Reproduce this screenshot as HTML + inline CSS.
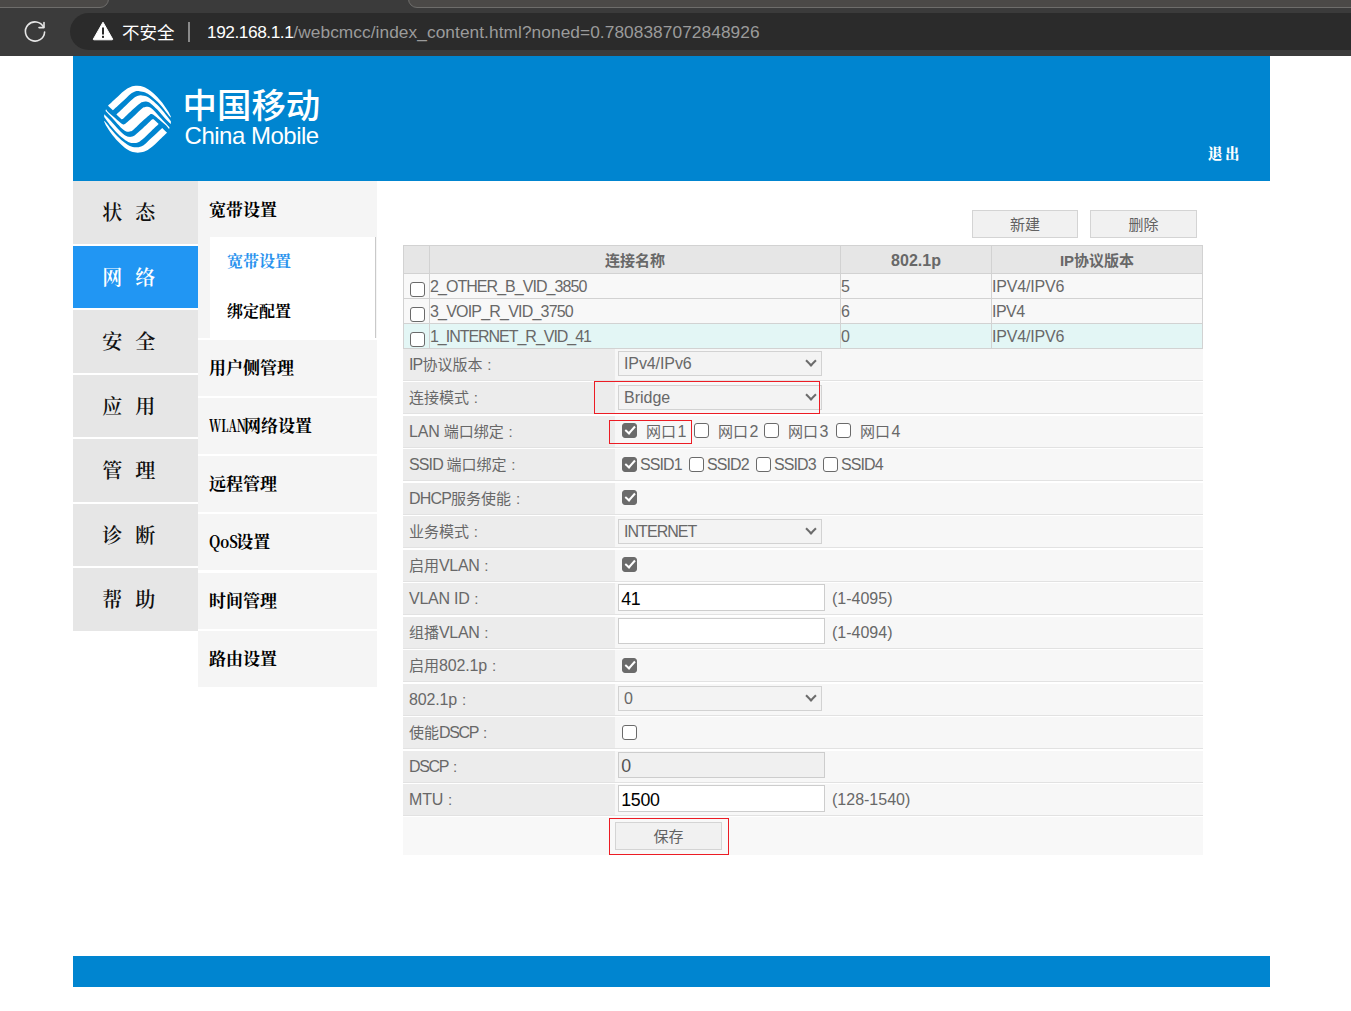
<!DOCTYPE html>
<html lang="zh-CN">
<head>
<meta charset="utf-8">
<title>China Mobile</title>
<style>
*{box-sizing:border-box;}
html,body{margin:0;padding:0;}
body{width:1351px;height:1011px;overflow:hidden;background:#fff;position:relative;
  font-family:"Liberation Sans","Noto Sans CJK SC",sans-serif;font-size:15px;color:#686868;}
.abs{position:absolute;}
/* ---------- browser chrome ---------- */
#chrome{left:0;top:0;width:1351px;height:56px;background:#3b3b3b;}
.tab{position:absolute;top:-10px;height:18px;background:#4b4947;border:1px solid #6e6d6b;border-radius:0 0 9px 9px;}
#pill{left:70px;top:13px;width:1400px;height:37px;background:#2b2b2b;border-radius:18.5px 0 0 18.5px;}
#url{left:207px;top:20px;font-size:17.3px;line-height:24px;color:#9b9b9b;white-space:nowrap;letter-spacing:-0.45px;}
#url b{font-weight:normal;color:#fff;}
#unsafe{left:122px;top:19px;font-size:17.5px;line-height:26px;color:#fff;white-space:nowrap;font-family:"Noto Sans CJK SC","Liberation Sans",sans-serif;}
#sep{left:188px;top:22px;width:1.5px;height:20px;background:#8a8a8a;}
/* ---------- header ---------- */
#hdr{left:73px;top:55.5px;width:1197px;height:125px;background:#0085d0;}
#cn{left:182.6px;top:79px;font-family:"Noto Sans CJK SC","Liberation Sans",sans-serif;font-weight:500;font-size:34.4px;line-height:48px;color:#fff;white-space:nowrap;letter-spacing:0px;}
#en{left:184.6px;top:121.3px;font-size:24px;line-height:30px;color:#fff;white-space:nowrap;letter-spacing:-0.5px;}
#logout{left:1208px;top:142.4px;font-family:"Noto Serif CJK SC","Liberation Serif",serif;font-weight:900;font-size:14.5px;letter-spacing:2.4px;line-height:22px;color:#fff;white-space:nowrap;}
/* ---------- nav ---------- */
.nav{position:absolute;left:73px;width:125px;height:62.5px;background:#e6e6e6;color:#111;
  font-family:"Noto Serif CJK SC","Liberation Serif",serif;font-weight:600;font-size:20px;line-height:62px;text-align:center;white-space:pre;word-spacing:8px;padding-right:13.6px;}
.nav.on{background:#2196f3;color:#fff;}
.sub{position:absolute;left:198px;width:179px;height:56px;background:#f5f5f5;color:#000;
  font-family:"Noto Serif CJK SC","Liberation Serif",serif;font-weight:700;font-size:17px;line-height:54px;padding-left:11px;white-space:nowrap;}
#subbox{left:210px;top:237px;width:166px;height:100.5px;background:#fff;border-right:1.5px solid #c9c9c9;}
.sub2{position:absolute;left:227px;font-family:"Noto Serif CJK SC","Liberation Serif",serif;font-weight:700;font-size:16px;line-height:24px;color:#000;white-space:nowrap;}

/* ---------- main ---------- */
.btn{background:#f1f1f1;border:1px solid #d4d4d4;color:#626262;font-size:15px;line-height:25px;text-align:center;font-family:"Noto Sans CJK SC","Liberation Sans",sans-serif;}
.tbl{border-top:1px solid #d2d2d2;border-left:1px solid #d2d2d2;z-index:2;}
.tr{position:absolute;left:0;width:799px;background:#f8f8f8;}
.tr.th{background:#e6e6e6;font-weight:700;text-align:center;}
.tr.th .c{line-height:29px;letter-spacing:0;font-size:15px;}
.tr.hl{background:#e3f6f5;}
.c{position:absolute;top:0;height:100%;border-right:1px solid #d2d2d2;border-bottom:1px solid #d2d2d2;line-height:25.4px;white-space:nowrap;padding-left:0;font-size:16px;overflow:hidden;}
.c0{left:0;width:26px;}
.c1{left:26px;width:411px;}
.c2{left:437px;width:151px;}
.c3{left:588px;width:211px;}
.cb{position:absolute;display:block;width:15px;height:15px;border:1.5px solid #6a6a6a;border-radius:3px;background:#fff;}
.c0 .cb{left:6px;top:7.5px;}
.cb.on{background:#6b6b6b;border-color:#6b6b6b;}
.cb.on:after{content:"";position:absolute;left:3.7px;top:0.4px;width:4.4px;height:8.4px;border:solid #fff;border-width:0 2.3px 2.3px 0;transform:rotate(42deg);}
.row{position:absolute;left:403px;width:800px;height:32px;background:#f7f7f7;border-bottom:1px solid #e2e2e2;}
.lb{position:absolute;left:0;top:0;width:212px;height:31px;background:#ececec;padding-left:6px;line-height:31px;white-space:nowrap;font-size:15px;}
.t{position:absolute;top:0;line-height:31px;white-space:nowrap;font-size:15px;}
.t.ss{letter-spacing:-0.9px;font-size:16px;}
.l{font-size:16px;}
.k{font-style:normal;margin-left:4.8px;}
.sel{position:absolute;left:215px;top:3.2px;width:204px;height:25.2px;background:#f3f3f3;border:1px solid #d2d2d2;line-height:24.6px;padding-left:5px;font-size:16px;white-space:nowrap;}
.sel:after{content:"";position:absolute;right:6.3px;top:5.3px;width:6px;height:6px;border:solid #6b6b6b;border-width:0 2px 2px 0;transform:rotate(45deg);}
.inp{position:absolute;left:215px;top:1.2px;width:207px;height:26.4px;background:#fff;border:1px solid #cdcdcd;line-height:24px;padding-top:1.6px;overflow:hidden;padding-left:2.2px;font-size:17.8px;letter-spacing:-0.25px;color:#000;white-space:nowrap;font-family:"Liberation Sans",sans-serif;}
.inp.dis{background:#f0f0f0;color:#545454;}
.red{border:1px solid #ec1c24;}
.hw{display:inline-block;vertical-align:top;white-space:nowrap;}
.hw span{display:inline-block;transform-origin:0 50%;}
/* ---------- footer ---------- */
#ftr{left:73px;top:956px;width:1197px;height:31px;background:#0085d0;}
</style>
</head>
<body>
<!-- browser chrome -->
<div id="chrome" class="abs">
  <div class="tab" style="left:-12px;width:121px;"></div>
  <div class="tab" style="left:408px;width:1000px;"></div>
  <div id="pill" class="abs"></div>
  <svg class="abs" style="left:22px;top:19px" width="26" height="26" viewBox="0 0 26 26" fill="none" stroke="#e6e6e6" stroke-width="1.6" stroke-linecap="round" stroke-linejoin="round">
    <path d="M21.6 8.2 A9.6 9.6 0 1 0 22.6 13"/>
    <path d="M22 3.6 V8.6 H17"/>
  </svg>
  <svg class="abs" style="left:92px;top:21px" width="22" height="20" viewBox="0 0 22 20">
    <path d="M11 1.2 L20.6 18 Q21 18.8 20 18.8 H2 Q1 18.8 1.4 18 Z" fill="#fff" stroke="#fff" stroke-width="1" stroke-linejoin="round"/>
    <rect x="10" y="6.5" width="2" height="7" fill="#2b2b2b"/>
    <rect x="10" y="14.8" width="2" height="2.1" fill="#2b2b2b"/>
  </svg>
  <div id="unsafe" class="abs">不安全</div>
  <div id="sep" class="abs"></div>
  <div id="url" class="abs"><b>192.168.1.1</b><span style="letter-spacing:0.07px">/webcmcc/index_content.html?noned=0.7808387072848926</span></div>
</div>

<!-- header -->
<div id="hdr" class="abs"></div>
<svg id="logo" class="abs" style="left:95px;top:76px" width="90" height="86" viewBox="0 0 1058 1011" fill="#fff">
  <g id="lgA">
  <path d="M153 349 C168 334 215 291 246 262 C277 233 311 197 340 175 C368 153 392 138 418 128 C444 118 471 115 497 115 C523 115 549 118 575 128 C601 138 627 155 654 175 C680 195 706 220 732 248 C758 276 789 314 811 343 C832 371 849 398 863 421 C877 444 887 469 892 479 L892 489 C887 484 877 474 863 458 C849 441 832 416 811 390 C789 364 758 327 732 301 C706 275 677 251 654 233 C630 215 613 203 591 194 C569 184 543 180 523 178 C503 176 488 177 470 183 C453 189 440 195 418 212 C396 229 364 263 340 285 C316 307 297 324 275 344 C253 364 221 394 210 404 Z"/>
  <path d="M251 452 C267 437 315 392 347 361 C379 330 419 290 444 269 C469 248 479 242 497 235 C514 228 532 227 549 228 C566 228 584 231 601 238 C619 245 632 253 654 269 C675 286 706 311 732 337 C758 363 789 400 811 426 C832 452 849 477 863 494 C877 512 887 527 892 533 L892 565 C878 551 837 512 811 484 C784 455 758 422 732 395 C706 368 675 337 654 322 C632 306 617 303 601 301 C586 298 572 303 560 306 C547 309 547 307 528 322 C509 336 476 366 444 395 C413 424 360 476 340 495 C320 514 331 504 326 506 C321 508 314 507 311 507 Z"/>
  </g>
  <path d="M129 391 C135 398 145 414 163 433 C182 451 218 480 242 501 C266 522 294 547 310 558 C326 569 332 570 341 569 C350 568 349 566 366 552 C383 538 414 512 444 484 C475 456 525 404 549 384 C573 364 577 367 591 364 C605 360 618 358 633 364 C648 369 659 376 680 395 C701 414 732 451 758 479 C784 506 817 541 837 562 C856 583 869 597 876 604 L871 625 C865 618 855 602 837 583 C818 565 782 536 758 515 C734 494 706 469 690 458 C674 447 668 446 659 447 C650 448 651 450 634 464 C617 478 586 504 556 532 C525 560 475 612 451 632 C427 652 423 649 409 652 C395 656 382 658 367 652 C352 647 341 640 320 621 C299 602 268 565 242 537 C216 510 183 475 163 454 C144 433 131 419 124 412 Z"/>
  <use href="#lgA" transform="rotate(180 500 508)"/>
</svg>
<div id="cn" class="abs">中国移动</div>
<div id="en" class="abs">China Mobile</div>
<div id="logout" class="abs">退出</div>

<!-- left nav -->
<div class="nav" style="top:181px">状 态</div>
<div class="nav on" style="top:245.5px">网 络</div>
<div class="nav" style="top:310px">安 全</div>
<div class="nav" style="top:374.5px">应 用</div>
<div class="nav" style="top:439px">管 理</div>
<div class="nav" style="top:503.5px">诊 断</div>
<div class="nav" style="top:568px">帮 助</div>

<!-- sub nav -->
<div class="sub" style="top:181px;height:157px;line-height:56px;">宽带设置</div>
<div id="subbox" class="abs"></div>
<div class="sub2" style="top:249px;color:#2b93ee;">宽带设置</div>
<div class="sub2" style="top:299px;">绑定配置</div>
<div class="sub" style="top:339.5px">用户侧管理</div>
<div class="sub" style="top:398px"><span class="hw" style="width:35px"><span style="transform:scaleX(0.66)">WLAN</span></span>网络设置</div>
<div class="sub" style="top:456.2px">远程管理</div>
<div class="sub" style="top:514.4px"><span class="hw" style="width:27.3px"><span style="transform:scaleX(0.85)">QoS</span></span>设置</div>
<div class="sub" style="top:572.6px">时间管理</div>
<div class="sub" style="top:630.8px">路由设置</div>

<!-- MAIN -->
<div id="main">
<div class="btn abs" style="left:972px;top:210px;width:106px;height:28px;">新建</div>
<div class="btn abs" style="left:1090px;top:210px;width:107px;height:28px;">删除</div>

<div class="abs tbl" style="left:403px;top:244.5px;width:800px;height:104.5px;">
  <div class="tr th" style="top:0;height:28.5px;"><div class="c c0"></div><div class="c c1">连接名称</div><div class="c c2" style="font-size:16px">802.1p</div><div class="c c3">IP协议版本</div></div>
  <div class="tr" style="top:28.5px;height:25px;"><div class="c c0"><i class="cb"></i></div><div class="c c1" style="letter-spacing:-0.95px">2_OTHER_B_VID_3850</div><div class="c c2">5</div><div class="c c3" style="letter-spacing:-0.19px">IPV4/IPV6</div></div>
  <div class="tr" style="top:53.5px;height:25px;"><div class="c c0"><i class="cb"></i></div><div class="c c1" style="letter-spacing:-0.8px">3_VOIP_R_VID_3750</div><div class="c c2">6</div><div class="c c3" style="letter-spacing:-0.5px">IPV4</div></div>
  <div class="tr hl" style="top:78.5px;height:25px;"><div class="c c0"><i class="cb"></i></div><div class="c c1" style="letter-spacing:-1.03px">1_INTERNET_R_VID_41</div><div class="c c2">0</div><div class="c c3" style="letter-spacing:-0.19px">IPV4/IPV6</div></div>
</div>

<div class="row" style="top:348.5px"><div class="lb"><span class="l" style="letter-spacing:-0.85px">IP</span>协议版本<i class="k">:</i></div><div class="sel" style="letter-spacing:-0.1px;top:2.3px">IPv4/IPv6</div></div>
<div class="row" style="top:382px"><div class="lb">连接模式<i class="k">:</i></div><div class="sel">Bridge</div></div>
<div class="row" style="top:415.5px"><div class="lb"><span class="l" style="letter-spacing:-0.21px">LAN </span>端口绑定<i class="k">:</i></div>
  <i class="cb on" style="left:219px;top:7px"></i><span class="t" style="left:243px">网口<span class="l" style="margin-left:1.5px">1</span></span>
  <i class="cb" style="left:291px;top:7px"></i><span class="t" style="left:315px">网口<span class="l" style="margin-left:1.5px">2</span></span>
  <i class="cb" style="left:361px;top:7px"></i><span class="t" style="left:385px">网口<span class="l" style="margin-left:1.5px">3</span></span>
  <i class="cb" style="left:433px;top:7px"></i><span class="t" style="left:457px">网口<span class="l" style="margin-left:1.5px">4</span></span>
</div>
<div class="row" style="top:449px"><div class="lb"><span class="l" style="letter-spacing:-0.87px">SSID </span>端口绑定<i class="k">:</i></div>
  <i class="cb on" style="left:219px;top:8px"></i><span class="t ss" style="left:237px">SSID1</span>
  <i class="cb" style="left:286px;top:8px"></i><span class="t ss" style="left:304px">SSID2</span>
  <i class="cb" style="left:353px;top:8px"></i><span class="t ss" style="left:371px">SSID3</span>
  <i class="cb" style="left:420px;top:8px"></i><span class="t ss" style="left:438px">SSID4</span>
</div>
<div class="row" style="top:482.5px"><div class="lb"><span class="l" style="letter-spacing:-0.81px">DHCP</span>服务使能<i class="k">:</i></div><i class="cb on" style="left:219px;top:7.5px"></i></div>
<div class="row" style="top:516px"><div class="lb">业务模式<i class="k">:</i></div><div class="sel" style="letter-spacing:-0.95px">INTERNET</div></div>
<div class="row" style="top:549.5px"><div class="lb">启用<span class="l" style="letter-spacing:-0.35px">VLAN</span><i class="k">:</i></div><i class="cb on" style="left:219px;top:7.5px"></i></div>
<div class="row" style="top:583px"><div class="lb"><span class="l" style="letter-spacing:-0.24px">VLAN ID</span><i class="k">:</i></div><div class="inp">41</div><span class="t" style="left:429px;font-size:16px">(1-4095)</span></div>
<div class="row" style="top:616.5px"><div class="lb">组播<span class="l" style="letter-spacing:-0.35px">VLAN</span><i class="k">:</i></div><div class="inp"></div><span class="t" style="left:429px;font-size:16px">(1-4094)</span></div>
<div class="row" style="top:650px"><div class="lb">启用<span class="l" style="letter-spacing:-0.14px">802.1p</span><i class="k">:</i></div><i class="cb on" style="left:219px;top:7.5px"></i></div>
<div class="row" style="top:683.5px"><div class="lb"><span class="l" style="letter-spacing:-0.14px">802.1p</span><i class="k">:</i></div><div class="sel" style="top:2.6px">0</div></div>
<div class="row" style="top:717px"><div class="lb">使能<span class="l" style="letter-spacing:-1.32px">DSCP</span><i class="k">:</i></div><i class="cb" style="left:219px;top:7.5px"></i></div>
<div class="row" style="top:750.5px"><div class="lb"><span class="l" style="letter-spacing:-1.32px">DSCP</span><i class="k">:</i></div><div class="inp dis">0</div></div>
<div class="row" style="top:784px"><div class="lb"><span class="l" style="letter-spacing:-0.13px">MTU</span><i class="k">:</i></div><div class="inp">1500</div><span class="t" style="left:429px;font-size:16px">(128-1540)</span></div>
<div class="abs" style="left:403px;top:817px;width:800px;height:38px;background:#f8f8f8;"></div>
<div class="btn abs" style="left:615px;top:821.5px;width:107px;height:28px;">保存</div>

<div class="red abs" style="left:594px;top:381px;width:226px;height:32.5px;"></div>
<div class="red abs" style="left:609px;top:420px;width:83px;height:24px;"></div>
<div class="red abs" style="left:609px;top:818px;width:120px;height:37px;"></div>
</div>

<!-- footer -->
<div id="ftr" class="abs"></div>
</body>
</html>
